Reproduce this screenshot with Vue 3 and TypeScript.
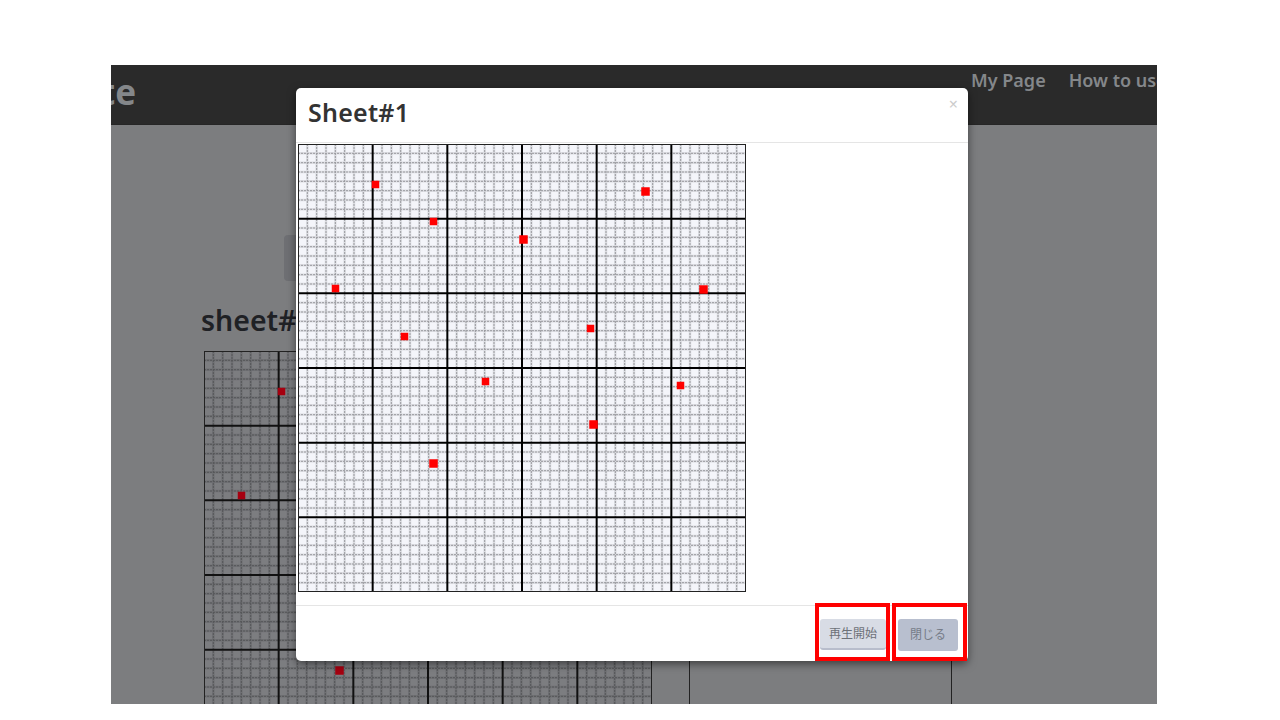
<script setup lang="ts">
const size = 448
const major = size / 6
const minor = major / 8
const minorLines: number[] = []
for (let i = 1; i < 48; i++) if (i % 8 !== 0) minorLines.push(i * minor)
const majorLines = [1, 2, 3, 4, 5].map((i) => i * major)
const markers = [
  { x: 375, y: 184, s: 7 }, { x: 645, y: 191, s: 8 }, { x: 433, y: 221, s: 7 },
  { x: 523, y: 239, s: 8 }, { x: 335, y: 288, s: 7 }, { x: 703, y: 289, s: 8 },
  { x: 404, y: 336, s: 7 }, { x: 590, y: 328, s: 7 }, { x: 485, y: 381, s: 7 },
  { x: 680, y: 385, s: 7 }, { x: 593, y: 424, s: 8 }, { x: 433, y: 463, s: 8 },
].map((m) => ({
  x: m.x - 298 - m.s / 2 + 0.25,
  y: m.y - 144 - m.s / 2 + 0.25,
  s: m.s + 0.5,
}))
</script>

<template>
  <div class="slide">
    <div class="frame">
      <nav class="nav">
        <span class="logo">te</span>
        <div class="links">
          <span>My Page</span>
          <span>How to use</span>
        </div>
      </nav>
      <main class="page">
        <div class="ghost-btn"></div>
        <h2 class="sheet-title">sheet#1</h2>
        <div class="sheet-row">
          <svg class="grid dim" :width="size" :height="size" :viewBox="`0 0 ${size} ${size}`">
            <rect :width="size" :height="size" class="paper" />
            <g class="band">
              <template v-for="p in minorLines" :key="p">
                <line :x1="p" y1="0" :x2="p" :y2="size" />
                <line x1="0" :y1="p" :x2="size" :y2="p" />
              </template>
            </g>
            <g class="minor">
              <template v-for="p in minorLines" :key="p">
                <line :x1="p" y1="0" :x2="p" :y2="size" />
                <line x1="0" :y1="p" :x2="size" :y2="p" />
              </template>
            </g>
            <g class="major">
              <template v-for="p in majorLines" :key="p">
                <line :x1="p" y1="0" :x2="p" :y2="size" />
                <line x1="0" :y1="p" :x2="size" :y2="p" />
              </template>
            </g>
            <rect x="0.5" y="0.5" :width="size - 1" :height="size - 1" class="edge" />
            <rect v-for="(m, i) in markers" :key="i" :x="m.x" :y="m.y" :width="m.s" :height="m.s" class="marker" />
          </svg>
          <div class="side-box"></div>
        </div>
      </main>
    </div>

    <section class="modal">
      <header class="modal-head">
        <h1>Sheet#1</h1>
        <span class="close">×</span>
      </header>
      <div class="modal-body">
        <svg class="grid" :width="size" :height="size" :viewBox="`0 0 ${size} ${size}`">
          <rect :width="size" :height="size" class="paper" />
          <g class="band">
            <template v-for="p in minorLines" :key="p">
              <line :x1="p" y1="0" :x2="p" :y2="size" />
              <line x1="0" :y1="p" :x2="size" :y2="p" />
            </template>
          </g>
          <g class="minor">
            <template v-for="p in minorLines" :key="p">
              <line :x1="p" y1="0" :x2="p" :y2="size" />
              <line x1="0" :y1="p" :x2="size" :y2="p" />
            </template>
          </g>
          <g class="major">
            <template v-for="p in majorLines" :key="p">
              <line :x1="p" y1="0" :x2="p" :y2="size" />
              <line x1="0" :y1="p" :x2="size" :y2="p" />
            </template>
          </g>
          <rect x="0.5" y="0.5" :width="size - 1" :height="size - 1" class="edge" />
          <rect v-for="(m, i) in markers" :key="i" :x="m.x" :y="m.y" :width="m.s" :height="m.s" class="marker" />
        </svg>
      </div>
      <footer class="modal-foot">
        <button class="btn play">再生開始</button>
        <button class="btn shut">閉じる</button>
      </footer>
    </section>

    <div class="callout one"></div>
    <div class="callout two"></div>
  </div>
</template>

<style>
html, body { margin: 0; background: #fff; }
</style>

<style scoped>
.slide {
  position: relative;
  width: 1280px;
  height: 720px;
  overflow: hidden;
  background: #fff;
  padding: 65px 0 0 111px;
  box-sizing: border-box;
  font-family: "Noto Sans", "Noto Sans CJK JP", sans-serif;
}
.frame {
  width: 1046px;
  height: 639px;
  overflow: hidden;
  background: #7c7d7f;
}
.nav {
  height: 60px;
  box-sizing: border-box;
  border-bottom: 1px solid #262626;
  background: #2a2a2a;
  overflow: hidden;
  display: flex;
  justify-content: space-between;
  color: #84878a;
}
.logo {
  margin-left: -11px;
  font-size: 35px;
  font-weight: 700;
  line-height: 54px;
}
.links {
  display: flex;
  gap: 23px;
  font-size: 18px;
  font-weight: 600;
  line-height: 31px;
  white-space: nowrap;
  width: 186px;
}
.page { padding: 110px 0 0 93px; }
.ghost-btn {
  width: 120px;
  height: 46px;
  margin-left: 80px;
  border-radius: 4px;
  background: #6e6f73;
}
.sheet-title {
  margin: 19px 0 11px -3px;
  font-size: 28.5px;
  line-height: 40px;
  font-weight: 600;
  color: #1f2125;
}
.sheet-row { display: flex; gap: 37px; align-items: stretch; }
.grid { display: block; flex: none; }
.side-box {
  width: 263px;
  height: 448px;
  box-sizing: border-box;
  border: solid #222;
  border-width: 0 1px;
}
.paper { fill: #f4f5fa; }
.band line { stroke: #dcdde2; stroke-width: 2.5; }
.minor line { stroke: #9a9b9f; stroke-width: 1; stroke-dasharray: 2 1; }
.major line { stroke: #000; stroke-width: 2; }
.edge { fill: none; stroke: #222; stroke-width: 1; }
.marker { fill: #f00; }
.dim .paper { fill: #7c7d80; }
.dim .band line { stroke: #6f7073; }
.dim .minor line { stroke: #56575a; }
.dim .major line { stroke: #111; }
.dim .marker { fill: #a60010; }
.modal {
  position: absolute;
  left: 296px;
  top: 88px;
  width: 672px;
  height: 573px;
  display: flex;
  flex-direction: column;
  background: #fff;
  border-radius: 5px;
  box-shadow: 0 3px 9px rgba(0, 0, 0, 0.5);
  overflow: hidden;
}
.modal-head {
  height: 55px;
  flex: none;
  box-sizing: border-box;
  border-bottom: 1px solid #e5e5e5;
  padding: 0 12px;
  display: flex;
  justify-content: space-between;
  align-items: flex-start;
}
.modal-head h1 {
  margin: 0;
  font-size: 25px;
  letter-spacing: 0.25px;
  font-weight: 600;
  line-height: 48px;
  color: #333;
}
.close {
  color: #ccc;
  font-size: 16px;
  line-height: 33px;
  margin-right: -2px;
}
.modal-body {
  flex: 1;
  padding: 1px 2px;
}
.modal-foot {
  height: 56px;
  flex: none;
  box-sizing: border-box;
  border-top: 1px solid #e5e5e5;
  display: flex;
  justify-content: flex-end;
  align-items: flex-start;
  gap: 12px;
  padding: 13px 10px 0 0;
}
.btn {
  border: 0;
  border-radius: 3px;
  font-family: inherit;
  font-size: 12px;
  padding: 0 0 2px;
  box-sizing: border-box;
}
.play {
  width: 66px;
  height: 31px;
  background: #d8dce5;
  color: #6d7178;
  border-bottom: 2px solid #b8bdcc;
}
.shut {
  width: 60px;
  height: 32px;
  background: #b8bfcf;
  color: #767c88;
}
.callout {
  position: absolute;
  top: 603px;
  height: 58px;
  box-sizing: border-box;
  border: 4px solid #f00;
}
.one { left: 815px; width: 75px; }
.two { left: 892px; width: 75px; }
</style>
